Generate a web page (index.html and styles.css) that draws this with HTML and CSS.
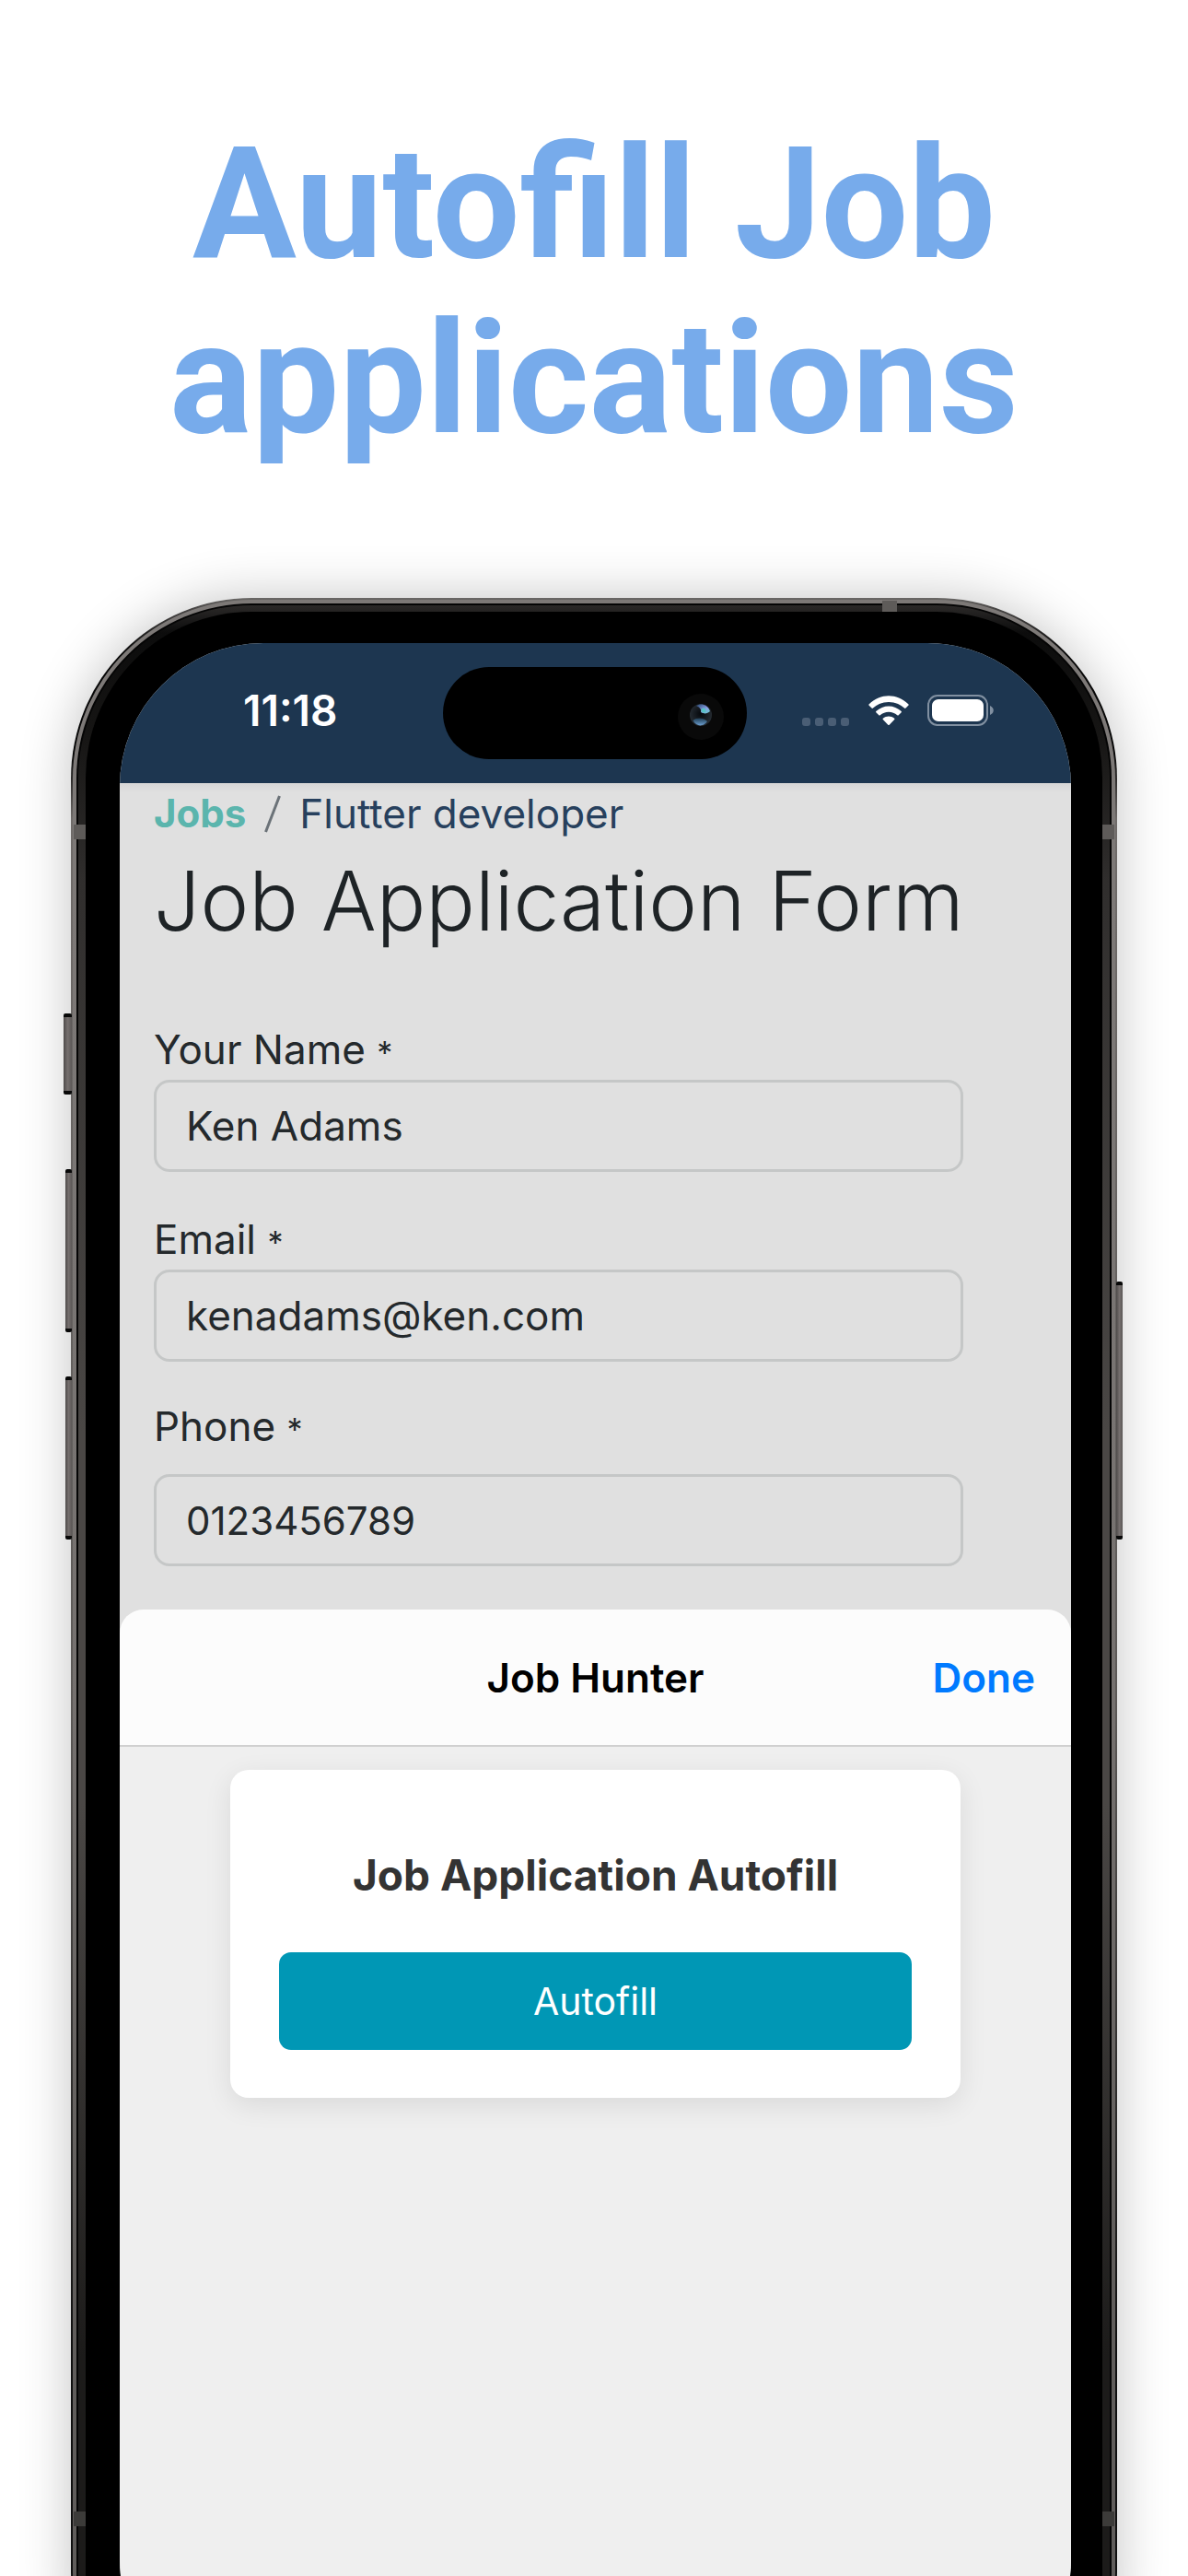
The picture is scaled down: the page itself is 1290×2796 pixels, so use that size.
FILE: index.html
```html
<!DOCTYPE html>
<html lang="en">
<head>
<meta charset="utf-8">
<meta name="viewport" content="width=device-width, initial-scale=1">
<title>Autofill Job applications</title>
<link rel="stylesheet" href="styles.css">
</head>
<body>
<h1 class="headline">Autofill Job<br>applications</h1>
<main class="phone">
  <span class="key key-action"></span>
  <span class="key key-up"></span>
  <span class="key key-down"></span>
  <span class="key key-side"></span>
  <div class="rail">
    <div class="groove">
      <div class="chamfer">
        <span class="band band-left"></span>
        <span class="band band-right"></span>
        <span class="band band-top"></span>
        <span class="band band-left band-low"></span>
        <span class="band band-right band-low"></span>
        <div class="bezel">
          <div class="screen">
            <header class="status">
              <time class="clock">11:18</time>
              <div class="island">
                <svg class="lens" viewBox="0 0 52 52" aria-hidden="true">
                  <defs>
                    <radialGradient id="glass" cx="50%" cy="45%" r="60%">
                      <stop offset="0" stop-color="#05080c"/>
                      <stop offset="1" stop-color="#2a3138"/>
                    </radialGradient>
                    <linearGradient id="glint" x1="0" y1="0" x2="1" y2="1">
                      <stop offset="0" stop-color="#24466f"/>
                      <stop offset=".6" stop-color="#8c9fe6"/>
                      <stop offset="1" stop-color="#5fd0c8"/>
                    </linearGradient>
                    <linearGradient id="pool" x1="0" y1="0" x2="0" y2="1">
                      <stop offset="0" stop-color="#1d3a50"/>
                      <stop offset="1" stop-color="#6c9fd0"/>
                    </linearGradient>
                  </defs>
                  <circle cx="26" cy="26" r="25" fill="#090909"/>
                  <circle cx="26" cy="24" r="12" fill="url(#glass)"/>
                  <path d="M21 14C26 10.500 34 13 36 20C33 23 29 23 26 21C27 18 24 15 21 14Z" fill="url(#glint)"/>
                  <path d="M17.500 30C21 26 30 27 33 31C29 37 21 37 17.500 30Z" fill="url(#pool)"/>
                  <circle cx="29" cy="19" r="2.500" fill="#57c4c4"/>
                </svg>
              </div>
              <div class="indicators">
                <svg class="dots" viewBox="0 0 52 9" aria-label="No signal" role="img">
                  <rect x="0" width="9" height="9" rx="3"/><rect x="14" width="9" height="9" rx="3"/><rect x="28" width="9" height="9" rx="3"/><rect x="42" width="9" height="9" rx="3"/>
                </svg>
                <svg class="wifi" viewBox="0 0 44 33" aria-label="Wi-Fi" role="img">
                  <path d="M0.500 9.500C12.500-2.800 31.500-2.800 43.500 9.500Q44 10 43.500 10.500L40.500 13.600Q39.700 14.200 39 13.500C29.500 4.700 14.500 4.700 5 13.500Q4.300 14.200 3.500 13.600L0.500 10.500Q0 10 0.500 9.500Z"/>
                  <path d="M8.300 17C16 9.500 28 9.500 35.700 17Q36.300 17.700 35.700 18.300L32.700 21.300Q32 21.900 31.300 21.300C26.200 16.600 17.800 16.600 12.700 21.300Q12 21.900 11.300 21.300L8.300 18.300Q7.700 17.700 8.300 17Z"/>
                  <path d="M15.800 24.700C19.500 21.700 24.500 21.700 28.200 24.700Q28.900 25.300 28.200 26L22.700 31.700Q22 32.300 21.300 31.700L15.800 26Q15.100 25.300 15.800 24.700Z"/>
                </svg>
                <svg class="battery" viewBox="0 0 73 34" aria-label="Battery full" role="img">
                  <rect x="1" y="1" width="64" height="32" rx="10" fill="none" stroke="#8190a1" stroke-width="2"/>
                  <rect x="5" y="5" width="56" height="24" rx="7" fill="#fff"/>
                  <path d="M68 12C73 14 73 20 68 22Z" fill="#8190a1"/>
                </svg>
              </div>
            </header>

            <section class="web">
              <nav class="crumbs" aria-label="Breadcrumb">
                <a class="crumb-link" href="#jobs">Jobs</a>
                <svg class="slash" viewBox="0 0 18 41" aria-hidden="true"><path d="M1.500 40L16.500 1"/></svg>
                <span>Flutter developer</span>
              </nav>
              <h2 class="form-title">Job Application Form</h2>
              <form class="form">
                <div class="field">
                  <label for="name">Your Name <span class="star">*</span></label>
                  <input id="name" type="text" value="Ken Adams">
                </div>
                <div class="field">
                  <label for="email">Email <span class="star">*</span></label>
                  <input id="email" type="email" value="kenadams@ken.com">
                </div>
                <div class="field field-phone">
                  <label for="phone">Phone <span class="star">*</span></label>
                  <input id="phone" type="tel" value="0123456789">
                </div>
              </form>
            </section>

            <section class="sheet">
              <header class="sheet-bar">
                <h2 class="sheet-title">Job Hunter</h2>
                <button class="done" type="button">Done</button>
              </header>
              <div class="card">
                <h3 class="card-title">Job Application Autofill</h3>
                <button class="autofill" type="button">Autofill</button>
              </div>
            </section>
          </div>
        </div>
      </div>
    </div>
  </div>
</main>
</body>
</html>
```

FILE: styles.css
```css
* {
  box-sizing: border-box;
}

body {
  margin: 0;
  height: 100vh;
  min-height: 1900px;
  overflow: hidden;
  display: flex;
  flex-direction: column;
  background: #fff;
  font-family: Inter, "Liberation Sans", sans-serif;
}

h1,
h2,
h3 {
  margin: 0;
}

.headline {
  padding: 127px 0 142px;
  color: #77abeb;
  font-family: Roboto, "Liberation Sans", sans-serif;
  font-size: 168px;
  font-weight: 700;
  line-height: 190px;
  text-align: center;
}

/* Device body: the foot of the phone runs off the page */
.phone {
  position: relative;
  flex: 1;
  display: flex;
  margin: 0 77px -190px;
  padding: 2px;
  border-radius: 196px;
  background: linear-gradient(#6a6866 0, #4a4847 10px, #060606 60px, #060606 170px, #6f6b69 240px, #5c5957 1200px, #101010 1900px);
  box-shadow: 0 0 56px rgba(0, 0, 0, 0.24);
}

.rail,
.groove,
.chamfer,
.bezel {
  flex: 1;
  min-width: 0;
  display: flex;
}

.rail {
  padding: 4px;
  border-radius: 194px;
  background: linear-gradient(#7d7977, #7d7977 300px, #75716f 1200px, #605d5b 1800px);
}

.groove {
  padding: 2px;
  border-radius: 190px;
  background: #050505;
}

.chamfer {
  padding: 7px 8px;
  border-radius: 188px;
  background: linear-gradient(#2b2928 0, #0c0c0c 30px, #161514 140px, #302e2d 300px, #4a4745 900px, #4a4745 1300px, #1c1b1a 1900px);
}

.bezel {
  padding: 34px 34px 37px 37px;
  border-radius: 180px;
  background: #000;
}

.screen {
  flex: 1;
  min-width: 0;
  display: flex;
  flex-direction: column;
  overflow: hidden;
  border-radius: 156px;
  background: #e0e0e0;
}

/* Side keys and antenna bands */
.key {
  position: absolute;
  left: -6px;
  width: 7px;
  height: 177px;
  border-block: 4px solid #080808;
  border-radius: 2px;
  background: linear-gradient(90deg, #4e4b4a, #756f6e 50%, #5b5756);
}

.key-action {
  top: 451px;
  left: -8px;
  width: 9px;
  height: 88px;
}

.key-up {
  top: 620px;
}

.key-down {
  top: 845px;
}

.key-side {
  top: 742px;
  left: auto;
  right: -6px;
  height: 280px;
}

.band {
  position: absolute;
  width: 13px;
  height: 16px;
  background: #5e5b59;
}

.band-left {
  top: 246px;
  left: 3px;
}

.band-right {
  top: 246px;
  right: 3px;
}

.band-top {
  top: 3px;
  right: 239px;
  width: 16px;
  height: 12px;
}

.band-low {
  top: auto;
  bottom: 244px;
  background: #3c3b39;
}

/* Status bar */
.status {
  display: grid;
  grid-template-columns: 1fr 330px 1fr;
  align-items: start;
  padding: 26px 1px 0 0;
  height: 152px;
  flex: none;
  background: #1d3650;
  color: #fff;
}

.clock {
  padding-left: 134px;
  font-size: 46px;
  font-weight: 600;
  line-height: 94px;
}

.island {
  display: flex;
  justify-content: flex-end;
  align-items: center;
  height: 100px;
  padding-right: 24px;
  border-radius: 50px;
  background: #000;
}

.lens {
  width: 52px;
  height: 52px;
  margin-top: 8px;
}

.indicators {
  display: flex;
  justify-content: flex-end;
  align-items: flex-end;
  gap: 20px;
  height: 64px;
  padding-right: 82px;
}

.dots {
  width: 52px;
  height: 9px;
  fill: #4a5e75;
}

.wifi {
  width: 44px;
  height: 33px;
  fill: #fff;
}

.battery {
  width: 73px;
  height: 34px;
}

/* Web page behind the sheet */
.web {
  padding: 8px 117px 47px 37px;
  background: linear-gradient(#d6d6d6, #e0e0e0 10px);
  color: #24292c;
}

.crumbs {
  display: flex;
  align-items: center;
  gap: 20px;
  font-size: 44px;
  line-height: 50px;
  color: #27405d;
}

.crumb-link {
  color: #5bb5ad;
  font-size: 42px;
  font-weight: 700;
  text-decoration: none;
}

.slash {
  width: 18px;
  height: 41px;
  fill: none;
  stroke: #6b7278;
  stroke-width: 3;
}

.form-title {
  padding: 20px 0 88px;
  font-size: 89px;
  font-weight: 300;
  line-height: 100px;
  white-space: nowrap;
  color: #1e2326;
}

.form {
  display: grid;
  gap: 50px;
}

.field {
  display: grid;
  gap: 10px;
}

.field-phone {
  gap: 29px;
  margin-top: -3px;
}

.field label {
  font-size: 44px;
  line-height: 46px;
}

.star {
  font-size: 34px;
  line-height: 1;
}

.field input {
  width: 100%;
  height: 100px;
  padding: 0 32px;
  border: 3px solid #c5c7c7;
  border-radius: 17px;
  background: transparent;
  color: inherit;
  font: 400 44px/50px Inter, "Liberation Sans", sans-serif;
}

.field input[type="tel"] {
  font-size: 42px;
}

/* Bottom sheet */
.sheet {
  flex: 1;
  display: flex;
  flex-direction: column;
  overflow: hidden;
  border-radius: 26px 26px 0 0;
  background: #efefef;
}

.sheet-bar {
  display: grid;
  grid-template-columns: 1fr auto 1fr;
  align-items: center;
  height: 149px;
  padding: 0 39px;
  border-bottom: 2px solid #d0d0d0;
  background: #fcfcfc;
}

.sheet-title {
  grid-column: 2;
  font-size: 44px;
  font-weight: 600;
  color: #000;
}

.done {
  justify-self: end;
  padding: 0;
  border: 0;
  background: none;
  color: #007aff;
  font: 600 44px/56px Inter, "Liberation Sans", sans-serif;
}

.card {
  margin: 25px 120px;
  padding: 84px 53px 52px;
  border-radius: 20px;
  background: #fff;
  box-shadow: 0 8px 30px rgba(0, 0, 0, 0.09);
  text-align: center;
}

.card-title {
  font-size: 46px;
  font-weight: 700;
  line-height: 60px;
  color: #333;
}

.autofill {
  width: 100%;
  height: 106px;
  margin-top: 54px;
  border: 0;
  border-radius: 13px;
  background: #0097b5;
  color: #fff;
  font: 400 41px/50px Inter, "Liberation Sans", sans-serif;
}
```
